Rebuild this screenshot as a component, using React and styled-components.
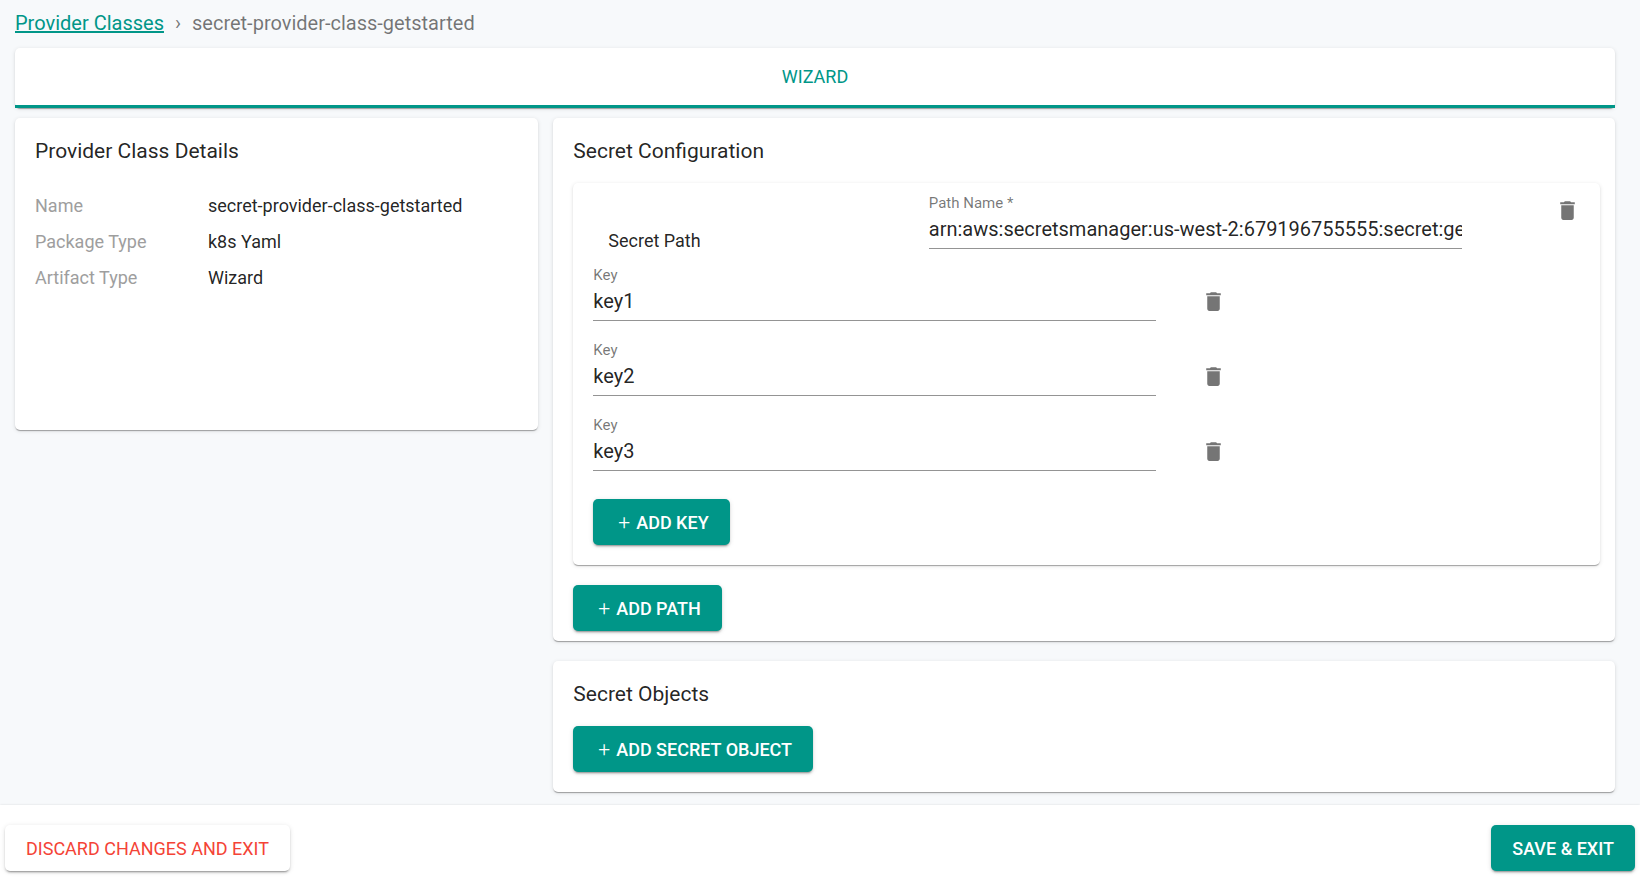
import React, { useState } from "react"
import styled, { createGlobalStyle } from "styled-components"
import { MdDelete } from "react-icons/md"

const GlobalStyle = createGlobalStyle`
  *,
  *::before,
  *::after {
    box-sizing: border-box;
  }

  body {
    margin: 0;
    background: #f7f9fb;
    color: rgba(0, 0, 0, 0.87);
    font-family: Roboto, "Liberation Sans", sans-serif;
    font-size: 18px;
  }
`

const Page = styled.div`
  min-height: 100vh;
  display: flex;
  flex-direction: column;
`

const Content = styled.main`
  flex: 1;
  padding: 8px 25px 12px 15px;
`

const Breadcrumbs = styled.nav`
  display: flex;
  align-items: center;
  gap: 11px;
  height: 30px;
  margin-bottom: 10px;
  font-size: 20px;
  line-height: 30px;
  color: rgba(0, 0, 0, 0.54);

  a {
    color: #009688;
    text-decoration: underline;
    text-decoration-thickness: 2px;
  }
`

const surface = `
  background: #fff;
  border-radius: 5px;
  box-shadow: 0 2px 1px -1px rgba(0, 0, 0, 0.2), 0 1px 1px rgba(0, 0, 0, 0.14),
    0 1px 4px rgba(0, 0, 0, 0.12);
`

const TabBar = styled.div`
  ${surface}
  display: flex;
  margin-bottom: 10px;
`

const Tab = styled.button`
  flex: 1;
  height: 60px;
  border: 0;
  border-bottom: 3px solid #009688;
  padding: 0;
  background: none;
  color: #009688;
  font: inherit;
  text-transform: uppercase;
  cursor: pointer;
`

const Columns = styled.div`
  display: grid;
  grid-template-columns: repeat(12, minmax(0, 1fr));
  gap: 15px;
  align-items: start;
`

const LeftColumn = styled.div`
  grid-column: span 4;
`

const RightColumn = styled.div`
  grid-column: span 8;
  display: flex;
  flex-direction: column;
  gap: 20px;
`

const Card = styled.section`
  ${surface}
  min-height: ${props => props.$minHeight || "0"};
  padding: ${props => props.$padding || "20px"};
`

const CardTitle = styled.h2`
  margin: 0;
  font-size: 21px;
  font-weight: 400;
  line-height: 27px;
`

const Details = styled.dl`
  display: grid;
  grid-template-columns: 173px 1fr;
  row-gap: 11px;
  margin: 28px 0 0;
  line-height: 25px;

  dt {
    color: #9e9e9e;
  }

  dd {
    margin: 0;
  }
`

const PathCard = styled.div`
  ${surface}
  margin: 18px 0 20px;
  padding: 10px 20px 20px;
`

const PathHead = styled.div`
  display: grid;
  grid-template-columns: 34fr 54fr 12fr;
  align-items: start;
  margin-bottom: 12px;
`

const PathTitle = styled.h3`
  margin: 0;
  padding: 35px 15px 0;
  font-size: 18px;
  font-weight: 400;
  line-height: 25px;
`

const Field = styled.div`
  display: flex;
  flex-direction: column;

  label {
    color: rgba(0, 0, 0, 0.54);
    font-size: 15px;
    line-height: 20px;
  }

  input {
    width: 100%;
    height: 36px;
    border: 0;
    border-bottom: 1px solid rgba(0, 0, 0, 0.42);
    padding: 0 0 4px;
    background: none;
    color: inherit;
    font-family: inherit;
    font-size: 20px;
    outline: none;
  }
`

const KeyRow = styled.div`
  display: grid;
  grid-template-columns: 57% auto;
  column-gap: 45px;
  align-items: center;
  justify-content: start;
  margin-bottom: 19px;
`

const IconButton = styled.button`
  display: flex;
  justify-self: end;
  margin: ${props => props.$margin || "0"};
  border: 0;
  padding: 0;
  background: none;
  color: rgba(0, 0, 0, 0.54);
  font-size: 25px;
  cursor: pointer;
`

const Button = styled.button`
  display: inline-flex;
  align-items: center;
  gap: 6px;
  height: 46px;
  border: 0;
  border-radius: 5px;
  padding: ${props => (props.$add ? "0 21px 0 25px" : "0 21px")};
  background: ${props => (props.$outlined ? "#fff" : "#009688")};
  color: ${props => (props.$outlined ? "#f44336" : "#fff")};
  box-shadow: 0 3px 1px -2px rgba(0, 0, 0, 0.2), 0 2px 2px rgba(0, 0, 0, 0.14),
    0 1px 5px rgba(0, 0, 0, 0.12);
  font-family: inherit;
  font-size: 18px;
  font-weight: ${props => (props.$outlined ? 400 : 500)};
  text-transform: uppercase;
  cursor: pointer;
`

const Plus = styled.span`
  font-size: 21px;
  font-weight: 300;
`

const Actions = styled.div`
  display: flex;
  margin-top: ${props => props.$top || "0"};
`

const Footer = styled.footer`
  display: flex;
  justify-content: space-between;
  padding: 20px 5px 11px;
  background: #fff;
  box-shadow: 0 0 2px rgba(0, 0, 0, 0.12);
`

const details = [
  { label: "Name", value: "secret-provider-class-getstarted" },
  { label: "Package Type", value: "k8s Yaml" },
  { label: "Artifact Type", value: "Wizard" },
]

function AddButton({ children, onClick }) {
  return (
    <Button type="button" $add onClick={onClick}>
      <Plus aria-hidden="true">+</Plus>
      {children}
    </Button>
  )
}

export default function App() {
  const [path, setPath] = useState(
    "arn:aws:secretsmanager:us-west-2:679196755555:secret:getstarted"
  )
  const [keys, setKeys] = useState(["key1", "key2", "key3"])

  const changeKey = (index, value) =>
    setKeys(keys.map((key, i) => (i === index ? value : key)))

  return (
    <Page>
      <GlobalStyle />
      <Content>
        <Breadcrumbs aria-label="Breadcrumb">
          <a href="#classes">Provider Classes</a>
          <span aria-hidden="true">›</span>
          <span>secret-provider-class-getstarted</span>
        </Breadcrumbs>

        <TabBar role="tablist">
          <Tab type="button" role="tab" aria-selected="true">
            Wizard
          </Tab>
        </TabBar>

        <Columns>
          <LeftColumn>
            <Card $minHeight="312px">
              <CardTitle>Provider Class Details</CardTitle>
              <Details>
                {details.map(item => (
                  <React.Fragment key={item.label}>
                    <dt>{item.label}</dt>
                    <dd>{item.value}</dd>
                  </React.Fragment>
                ))}
              </Details>
            </Card>
          </LeftColumn>

          <RightColumn>
            <Card $padding="20px 15px 10px 20px">
              <CardTitle>Secret Configuration</CardTitle>
              <PathCard>
                <PathHead>
                  <PathTitle>Secret Path</PathTitle>
                  <Field>
                    <label htmlFor="path-name">Path Name *</label>
                    <input
                      id="path-name"
                      required
                      value={path}
                      onChange={e => setPath(e.target.value)}
                    />
                  </Field>
                  <IconButton
                    type="button"
                    aria-label="Delete path"
                    $margin="5px 0 0"
                  >
                    <MdDelete />
                  </IconButton>
                </PathHead>
                {keys.map((key, index) => (
                  <KeyRow key={index}>
                    <Field>
                      <label htmlFor={`key-${index}`}>Key</label>
                      <input
                        id={`key-${index}`}
                        value={key}
                        onChange={e => changeKey(index, e.target.value)}
                      />
                    </Field>
                    <IconButton
                      type="button"
                      aria-label={`Delete ${key}`}
                      $margin="16px 0 0"
                      onClick={() => setKeys(keys.filter((_, i) => i !== index))}
                    >
                      <MdDelete />
                    </IconButton>
                  </KeyRow>
                ))}
                <Actions $top="28px">
                  <AddButton onClick={() => setKeys([...keys, ""])}>
                    Add Key
                  </AddButton>
                </Actions>
              </PathCard>
              <Actions>
                <AddButton>Add Path</AddButton>
              </Actions>
            </Card>

            <Card>
              <CardTitle>Secret Objects</CardTitle>
              <Actions $top="18px">
                <AddButton>Add Secret Object</AddButton>
              </Actions>
            </Card>
          </RightColumn>
        </Columns>
      </Content>

      <Footer>
        <Button type="button" $outlined>
          Discard changes and exit
        </Button>
        <Button type="button">Save &amp; Exit</Button>
      </Footer>
    </Page>
  )
}
